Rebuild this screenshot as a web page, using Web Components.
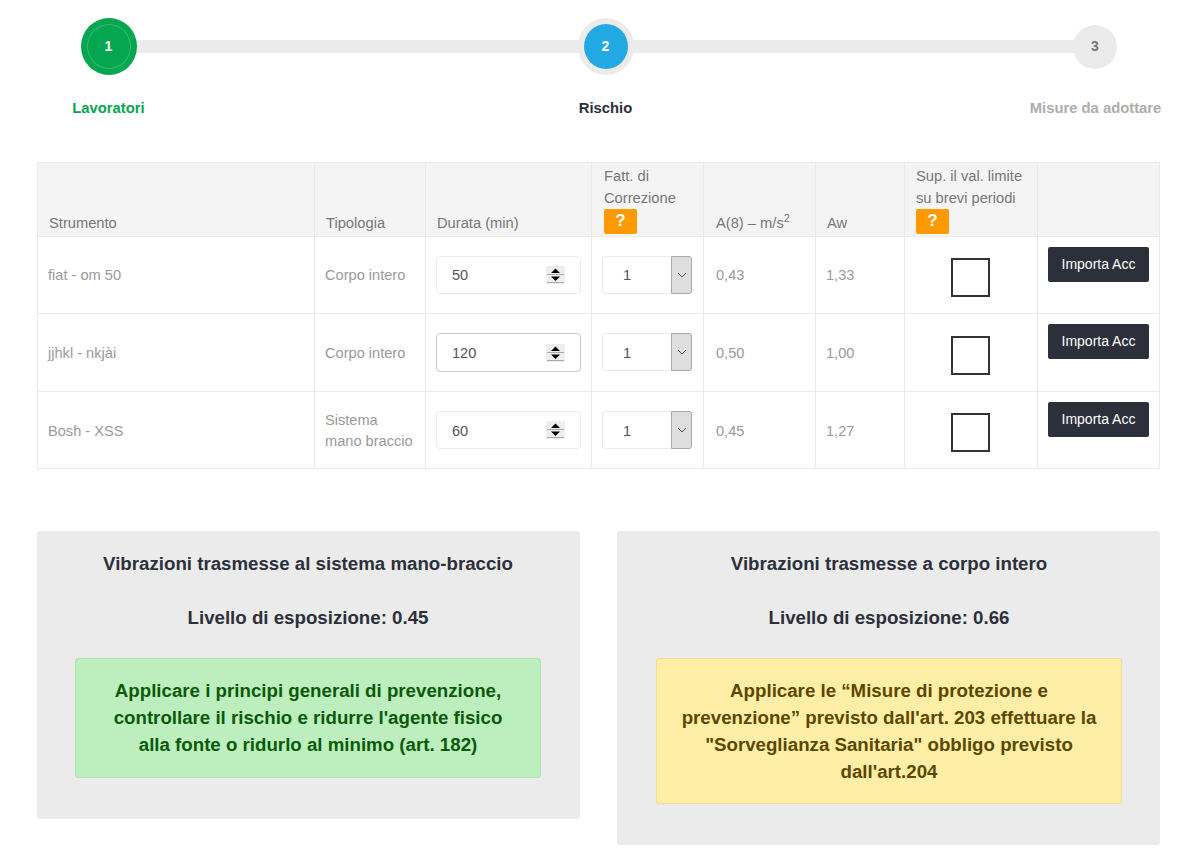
<!DOCTYPE html>
<html lang="it">
<head>
<meta charset="utf-8">
<title>Rischio vibrazioni</title>
<style>
    html, body {
        margin: 0;
        background: #fff;
        font-family: "Liberation Sans", Arial, sans-serif;
        color: #2b303b;
    }

    body {
        padding: 18px 22px 0 37px;
    }
</style>
</head>
<body>
<risk-stepper></risk-stepper>
<vibration-table></vibration-table>
<div id="panels" style="display:flex;gap:37px;align-items:flex-start">
    <exposure-panel heading="Vibrazioni trasmesse al sistema mano-braccio" level="0.45" kind="ok">
        Applicare i principi generali di prevenzione, controllare il rischio e ridurre l'agente fisico alla fonte o ridurlo al minimo (art. 182)
    </exposure-panel>
    <exposure-panel heading="Vibrazioni trasmesse a corpo intero" level="0.66" kind="warn">
        Applicare le “Misure di protezione e prevenzione” previsto dall'art. 203 effettuare la "Sorveglianza Sanitaria" obbligo previsto dall'art.204
    </exposure-panel>
</div>

<script>
class RiskStepper extends HTMLElement {
    constructor() {
        super();
        this.attachShadow({mode: 'open'});
        this.shadowRoot.innerHTML = `
            <style>
                :host {
                    display: block;
                    position: relative;
                    height: 144px;
                    margin-left: 35px;
                    width: 1090px;
                }
                .bar {
                    position: absolute;
                    left: 37px;
                    width: 986px;
                    top: 22px;
                    height: 13px;
                    background: #ebebeb;
                }
                .steps {
                    position: relative;
                    display: grid;
                    grid-template-columns: 73px 434px 53px 397px 133px;
                }
                .step {
                    display: flex;
                    flex-direction: column;
                    align-items: center;
                    white-space: nowrap;
                    font-size: 14.8px;
                    font-weight: bold;
                    line-height: 20px;
                }
                .ball {
                    box-sizing: border-box;
                    height: 57px;
                    width: 56px;
                    padding-bottom: 2px;
                    margin-bottom: 23px;
                    border-radius: 50%;
                    display: flex;
                    align-items: center;
                    justify-content: center;
                    flex: none;
                    font-size: 14px;
                }
                .done { grid-column: 1; color: #04a650; }
                .done .ball { background: #04a650; color: #fff; position: relative; }
                .done .ball::after {
                    content: '';
                    position: absolute;
                    inset: 6px;
                    border-radius: 50%;
                    border: 1px solid rgba(255, 255, 255, .2);
                }
                .now { grid-column: 3; color: #2b303b; }
                .now .ball { background: #22a9e3; color: #fff; border: 6px solid #ebebeb; padding-bottom: 1px; }
                .todo { grid-column: 5; color: #adadad; }
                .todo .ball { background: #ebebeb; color: #777; width: 44px; height: 44px; margin: 7px 1px 29px 0; }
            </style>
            <div class="bar"></div>
            <div class="steps">
                <div class="step done"><span class="ball">1</span>Lavoratori</div>
                <div class="step now"><span class="ball">2</span>Rischio</div>
                <div class="step todo"><span class="ball">3</span>Misure da adottare</div>
            </div>
        `;
    }
}

const helpTemplate = document.createElement('template');
helpTemplate.innerHTML = `
    <style>
        :host {
            display: block;
            width: 33px;
            height: 25px;
            border-radius: 2px;
            background: #ff9900;
            color: #fff;
            font-size: 17px;
            font-weight: bold;
            line-height: 23px;
            text-align: center;
        }
    </style>
    ?
`;

class HelpBadge extends HTMLElement {
    constructor() {
        super();
        this.attachShadow({mode: 'open'});
        this.shadowRoot.appendChild(helpTemplate.content.cloneNode(true));
    }
}

class NumberField extends HTMLElement {
    constructor() {
        super();
        this.attachShadow({mode: 'open'});
        this.shadowRoot.innerHTML = `
            <style>
                :host {
                    box-sizing: border-box;
                    display: flex;
                    align-items: center;
                    justify-content: space-between;
                    width: 145px;
                    height: 38px;
                    padding: 0 15px;
                    border: 1px solid #ebebeb;
                    border-radius: 4px;
                    background: #fff;
                    color: #555;
                    font-size: 14.6px;
                }
                :host([focused]) {
                    height: 39px;
                    border-color: #c6cad5;
                }
                :host([low]) .value { padding-top: 2px; }
                svg { display: block; }
            </style>
            <span class="value"><slot></slot></span>
            <svg width="19" height="18" viewBox="0 0 19 18">
                <rect width="19" height="18" fill="#eee"/>
                <rect x="1" y="8" width="17" height="1" fill="#aaa"/>
                <rect x="1" y="16" width="17" height="1" fill="#aaa"/>
                <path d="M9.500 2.500l4.500 4.500h-9z M9.500 15l4.500-4.500h-9z" fill="#000"/>
            </svg>
        `;
    }
}

class SelectField extends HTMLElement {
    constructor() {
        super();
        this.attachShadow({mode: 'open'});
        this.shadowRoot.innerHTML = `
            <style>
                :host {
                    display: flex;
                    width: 90px;
                    height: 38px;
                    color: #555;
                    font-size: 14.6px;
                    line-height: 36px;
                }
                :host([low]) { line-height: 38px; }
                .value {
                    flex: 1;
                    padding-left: 20px;
                    border: 1px solid #ebebeb;
                    border-right: 0;
                    border-radius: 4px 0 0 4px;
                    background: #fff;
                }
                .arrow {
                    box-sizing: border-box;
                    width: 21px;
                    display: flex;
                    align-items: center;
                    justify-content: center;
                    background: #dedede;
                    border: 1px solid #a9a9a9;
                    border-radius: 0 3px 3px 0;
                }
            </style>
            <span class="value"><slot></slot></span>
            <span class="arrow">
                <svg width="10" height="6" viewBox="0 0 10 6"><path d="M1 1l4 4 4-4" fill="none" stroke="#555" stroke-width="1"/></svg>
            </span>
        `;
    }
}

class CheckSquare extends HTMLElement {
    constructor() {
        super();
        this.attachShadow({mode: 'open'});
        this.shadowRoot.innerHTML = `
            <style>
                :host {
                    box-sizing: border-box;
                    display: block;
                    width: 39px;
                    height: 39px;
                    margin: 0 auto;
                    border: 2px solid #333;
                    background: #fff;
                }
            </style>
        `;
    }
}

class ActionButton extends HTMLElement {
    constructor() {
        super();
        this.attachShadow({mode: 'open'});
        this.shadowRoot.innerHTML = `
            <style>
                :host {
                    box-sizing: border-box;
                    display: block;
                    width: 101px;
                    height: 35px;
                    border-radius: 2px;
                    background: #2b303b;
                    color: #fff;
                    font-size: 14px;
                    line-height: 34px;
                    text-align: center;
                    white-space: nowrap;
                }
            </style>
            <slot></slot>
        `;
    }
}

const rows = [
    {tool: 'fiat - om 50', type: 'Corpo intero', minutes: '50', a8: '0,43', aw: '1,33'},
    {tool: 'jjhkl - nkjài', type: 'Corpo intero', minutes: '120', a8: '0,50', aw: '1,00', focused: true},
    {tool: 'Bosh - XSS', type: 'Sistema<br>mano braccio', minutes: '60', a8: '0,45', aw: '1,27'}
];

class VibrationTable extends HTMLElement {
    constructor() {
        super();
        this.attachShadow({mode: 'open'});
        const body = rows.map((r, i) => `
            <tr>
                <td>${r.tool}</td>
                <td>${r.type}</td>
                <td class="field"><number-field ${r.focused ? 'focused' : ''} ${i ? 'low' : ''}>${r.minutes}</number-field></td>
                <td class="field pick"><select-field ${i ? 'low' : ''}>1</select-field></td>
                <td class="wide">${r.a8}</td>
                <td>${r.aw}</td>
                <td class="check"><check-square></check-square></td>
                <td class="action"><action-button>Importa Acc</action-button></td>
            </tr>
        `).join('');
        this.shadowRoot.innerHTML = `
            <style>
                :host {
                    display: block;
                    margin-bottom: 62px;
                }
                table {
                    width: 1123px;
                    table-layout: fixed;
                    border-collapse: collapse;
                    font-size: 14.6px;
                    line-height: 21px;
                }
                th, td {
                    border: 1px solid #ebebeb;
                    text-align: left;
                    font-weight: normal;
                }
                th {
                    background: #f4f4f4;
                    color: #777;
                    vertical-align: bottom;
                    padding: 2px 11px;
                    font-size: 14.7px;
                    line-height: 22px;
                }
                th.wide { padding-left: 12px; }
                td {
                    color: #9a9a9a;
                    vertical-align: middle;
                    padding: 0 10px;
                }
                tr + tr td { padding-top: 2px; }
                td.wide { padding-left: 12px; }
                tr + tr td.field, td.field { padding: 19px 10px; }
                td.pick { vertical-align: top; }
                sup { font-size: 11px; line-height: 0; }
                tr + tr td.check, td.check { padding: 21px 11px 16px 9px; }
                tr + tr td.action, td.action { vertical-align: top; padding-top: 10px; }
            </style>
            <table>
                <colgroup>
                    <col style="width:277px"><col style="width:111px"><col style="width:166px"><col style="width:112px">
                    <col style="width:112px"><col style="width:89px"><col style="width:133px"><col style="width:122px">
                </colgroup>
                <thead>
                    <tr>
                        <th>Strumento</th>
                        <th>Tipologia</th>
                        <th>Durata (min)</th>
                        <th class="wide">Fatt. di Correzione<help-badge></help-badge></th>
                        <th class="wide">A(8) – m/s<sup>2</sup></th>
                        <th>Aw</th>
                        <th>Sup. il val. limite su brevi periodi<help-badge></help-badge></th>
                        <th></th>
                    </tr>
                </thead>
                <tbody>${body}</tbody>
            </table>
        `;
    }
}

class ExposurePanel extends HTMLElement {
    constructor() {
        super();
        this.attachShadow({mode: 'open'});
        this.shadowRoot.innerHTML = `
            <style>
                :host {
                    box-sizing: border-box;
                    display: block;
                    width: 543px;
                    flex: none;
                    padding-top: 19px;
                    padding-bottom: 41px;
                    border-radius: 3px;
                    background: #ebebeb;
                    color: #2b303b;
                    font-size: 18.7px;
                    font-weight: bold;
                    line-height: 27px;
                    text-align: center;
                }
                :host([kind=ok]) { padding-left: 38px; padding-right: 39px; }
                :host([kind=warn]) { padding-left: 39px; padding-right: 38px; }
                h4 { margin: 0 0 27px; font: inherit; }
                .level { margin-bottom: 27px; }
                .alert {
                    padding: 19px 22px 18px;
                    border: 1px solid;
                    border-radius: 3px;
                    line-height: 26.85px;
                }
                :host([kind=ok]) .alert { background: #bdeebd; border-color: #aee4ae; color: #0a5a0a; }
                :host([kind=warn]) .alert { background: #ffeea6; border-color: #fbd98c; color: #5c4700; }
            </style>
            <h4></h4>
            <div class="level"></div>
            <div class="alert"><slot></slot></div>
        `;
        this.shadowRoot.querySelector('h4').textContent = this.getAttribute('heading');
        this.shadowRoot.querySelector('.level').textContent = 'Livello di esposizione: ' + this.getAttribute('level');
    }
}

customElements.define('risk-stepper', RiskStepper);
customElements.define('help-badge', HelpBadge);
customElements.define('number-field', NumberField);
customElements.define('select-field', SelectField);
customElements.define('check-square', CheckSquare);
customElements.define('action-button', ActionButton);
customElements.define('vibration-table', VibrationTable);
customElements.define('exposure-panel', ExposurePanel);
</script>
</body>
</html>
